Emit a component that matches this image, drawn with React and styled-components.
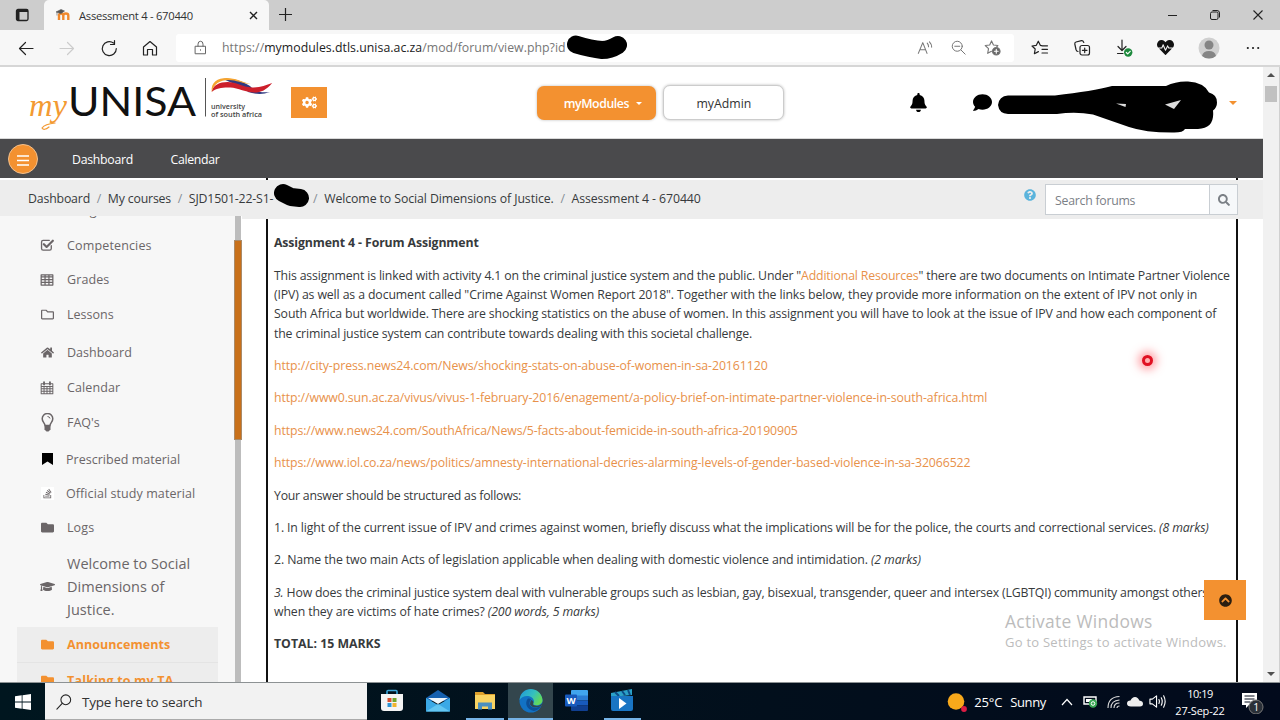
import styled, { createGlobalStyle } from "styled-components";
import {
  FaBell,
  FaChevronCircleUp,
  FaCogs,
  FaComment,
  FaFolder,
  FaGraduationCap,
  FaHeartbeat,
  FaHome,
  FaQuestionCircle,
  FaRegFolder,
  FaSearch,
  FaStackOverflow,
} from "react-icons/fa";

const GlobalStyle = createGlobalStyle`
  * {
    box-sizing: border-box;
  }
  body {
    margin: 0;
    overflow: hidden;
    font-family: "Open Sans", "Noto Sans", sans-serif;
    font-size: 12.3px;
    color: #373a3c;
  }
  svg {
    display: block;
    flex: none;
  }
`;

const Screen = styled.div`
  width: 1280px;
  height: 720px;
  display: flex;
  flex-direction: column;
  position: relative;
  overflow: hidden;
  background: #fff;
`;

const Label = styled.span`
  white-space: nowrap;
  letter-spacing: ${(p) => p.$ls || 0}px;
`;

const Spacer = styled.div`
  flex: ${(p) => (p.$w ? "none" : 1)};
  width: ${(p) => p.$w || 0}px;
`;

/* ---------- browser window ---------- */

const TabBar = styled.div`
  height: 30px;
  flex: none;
  display: flex;
  background: #cdcdcd;
`;
const TabMenu = styled.div`
  width: 44px;
  padding: 8px 0 0 15px;
`;
const Tab = styled.div`
  width: 225px;
  padding: 0 11px 0 12px;
  display: flex;
  align-items: center;
  gap: 9px;
  border-radius: 5px 5px 0 0;
  background: #f7f7f7;
  font-size: 11.2px;
  color: #333;
`;
const NewTab = styled.div`
  padding: 7px 0 0 9px;
`;
const WindowButtons = styled.div`
  display: flex;
  align-items: center;
  gap: 31px;
  padding-right: 16px;
`;

const Toolbar = styled.div`
  height: 37px;
  flex: none;
  display: flex;
  align-items: center;
  background: #f7f7f7;
  border-bottom: 2px solid #d6d6d6;
`;
const NavButtons = styled.div`
  width: 176px;
  flex: none;
  padding-left: 17px;
  display: flex;
  gap: 23.3px;
`;
const AddressBar = styled.div`
  width: 838px;
  height: 28px;
  flex: none;
  padding: 0 13px 0 17px;
  display: flex;
  align-items: center;
  background: #fff;
  border-radius: 3px;
  color: #767676;
  b {
    font-weight: 400;
    color: #222;
  }
`;
const Extensions = styled.div`
  display: flex;
  align-items: center;
  padding-left: 17px;
  gap: 24px;
`;

/* ---------- page ---------- */

const Viewport = styled.div`
  height: 615px;
  flex: none;
  display: flex;
`;
const Page = styled.div`
  width: 1263px;
  display: flex;
  flex-direction: column;
  overflow: hidden;
`;
const ScrollTrack = styled.div`
  width: 17px;
  display: flex;
  flex-direction: column;
  align-items: center;
  background: #f1f1f1;
  border-right: 1px solid #d0d0d0;
  padding: 6px 0 6px;
`;
const ScrollThumb = styled.div`
  width: 12px;
  height: 16px;
  margin: 9px 0 auto;
  background: #c1c1c1;
`;

const Header = styled.header`
  height: 72px;
  flex: none;
  display: flex;
  align-items: center;
  border-bottom: 1px solid #d9d9d9;
`;
const Settings = styled.div`
  width: 36px;
  height: 31px;
  display: flex;
  align-items: center;
  justify-content: center;
  color: #fff;
  background: #f39130;
`;
const HeaderButton = styled.div`
  width: ${(p) => (p.$primary ? 119 : 121)}px;
  height: ${(p) => (p.$primary ? 34 : 35)}px;
  margin-right: 7px;
  display: flex;
  align-items: center;
  justify-content: center;
  gap: 7px;
  border-radius: 7px;
  border: ${(p) => (p.$primary ? 0 : 1)}px solid #ccc;
  color: ${(p) => (p.$primary ? "#fff" : "#333")};
  background: ${(p) => (p.$primary ? "#f39130" : "#fff")};
  box-shadow: 0 0 3px #bbb;
  font-weight: ${(p) => (p.$primary ? 600 : 400)};
  padding-top: 2px;
  padding-left: ${(p) => (p.$primary ? 12 : 0)}px;
`;
const Caret = styled.span`
  border: ${(p) => p.$size || 3.5}px solid transparent;
  border-top-color: ${(p) => p.$color};
  border-bottom: 0;
  transform: ${(p) => (p.$up ? "rotate(180deg)" : "none")};
`;

const MainNav = styled.nav`
  height: 39px;
  flex: none;
  display: flex;
  align-items: center;
  padding-left: 8px;
  background: #4a4a4c;
  color: #fff;
  line-height: 17px;
  ${Label} {
    padding-top: 2px;
  }
`;
const MenuButton = styled.div`
  width: 30px;
  height: 30px;
  margin-right: 34px;
  padding-top: 3px;
  display: flex;
  align-items: center;
  justify-content: center;
  border: 1px solid #f3c08c;
  border-radius: 50%;
  background: #f39130;
`;

/* the post frame shows through between the nav and the breadcrumb */
const FramePeek = styled.div`
  height: 2px;
  flex: none;
  width: 972px;
  margin-left: 266px;
  border: solid #111;
  border-width: 0 2px;
`;
const Breadcrumb = styled.div`
  height: 39px;
  flex: none;
  display: flex;
  align-items: center;
  padding: 0 25px 0 28px;
  background: #ededed;
  > ${Label} {
    padding-bottom: 3px;
  }
  i {
    font-style: normal;
    color: #868e96;
    margin: 0 6.7px;
  }
`;
const HelpIcon = styled.div`
  height: 21px;
  margin-right: 9px;
  color: #5bb4dc;
`;
const SearchBox = styled.div`
  width: 193px;
  height: 31px;
  display: flex;
  border: 1px solid #c9ced3;
  background: #fff;
  color: #7b8086;
  line-height: 31px;
  padding-left: 9px;
`;
const SearchButton = styled.div`
  width: 28px;
  margin-left: auto;
  display: flex;
  align-items: center;
  justify-content: center;
  border-left: 1px solid #c9ced3;
  background: #f6f8fa;
`;

const Columns = styled.div`
  flex: 1;
  display: flex;
  min-height: 0;
`;
const Sidebar = styled.aside`
  width: 234px;
  margin-top: -3px;
  display: flex;
  flex-direction: column;
  overflow: hidden;
  background: #f7f7f7;
  padding-left: 17px;
`;
const SideItem = styled.div`
  width: 201px;
  height: ${(p) => p.$h}px;
  flex: none;
  display: flex;
  align-items: center;
  color: ${(p) => (p.$active ? "#f39130" : "#6b6668")};
  font-weight: ${(p) => (p.$active ? 700 : 400)};
  background: ${(p) => (p.$active ? "#ededed" : "none")};
  border-bottom: ${(p) => (p.$active ? 1 : 0)}px solid #e4e4e4;
  font-size: ${(p) => p.$size || 12.5}px;
  line-height: 23px;
  &:first-child {
    margin-top: -23px;
  }
`;
const SideIcon = styled.span`
  width: 26px;
  margin: 0 ${(p) => (p.$tight ? 6 : 7)}px 0 17px;
  display: flex;
  justify-content: center;
`;
const WhitePatch = styled.span`
  padding: 1px;
  background: #fff;
`;
const SideScroll = styled.div`
  width: 8px;
  margin-top: -3px;
  display: flex;
  flex-direction: column;
  align-items: center;
  background: linear-gradient(to right, #f7f7f7 1px, #bdbdbd 1px 7px, #fff 7px);
`;
const SideScrollThumb = styled.div`
  width: 8px;
  height: 200px;
  margin-top: 24px;
  background: #c8701a;
  border: 1px solid #a98a68;
`;

const Post = styled.main`
  width: 972px;
  margin-left: 24px;
  padding: 14.4px 0 0 6px;
  border: solid #111;
  border-width: 0 2px;
  line-height: 19.3px;
  p {
    margin: 0 0 13.1px;
  }
`;
const Line = styled(Label)`
  display: block;
  height: 19.3px;
`;
const Link = styled.span`
  color: #e8914a;
`;

/* ---------- things floating above the page ---------- */

const Floating = styled.div`
  position: absolute;
  left: ${(p) => p.$x}px;
  top: ${(p) => p.$y}px;
`;
const BackToTop = styled(Floating)`
  width: 42px;
  height: 40px;
  display: flex;
  align-items: center;
  justify-content: center;
  background: #f39130;
  color: #2b1e10;
`;
const Watermark = styled(Floating)`
  display: flex;
  flex-direction: column;
  color: #bcbcbc;
  font-size: 13px;
  line-height: 20px;
`;
const WatermarkTitle = styled(Label)`
  font-size: 17.4px;
  line-height: 22px;
`;
const Pointer = styled(Floating)`
  width: 11px;
  height: 11px;
  border: 3.5px solid #e01022;
  border-radius: 50%;
  background: #ffb0b0;
  box-shadow: 0 0 8px 4px rgba(255, 80, 90, 0.5);
`;

/* ---------- taskbar ---------- */

const Taskbar = styled.footer`
  height: 38px;
  flex: none;
  display: flex;
  background: linear-gradient(to right, #00161f, #020f1c 60%, #020a1c);
  border-top: 1px solid #8d9294;
  color: #fff;
`;
const StartButton = styled.div`
  width: 45px;
  display: flex;
  align-items: center;
  justify-content: center;
`;
const TaskSearch = styled.div`
  width: 322px;
  display: flex;
  align-items: center;
  gap: 10px;
  padding: 2px 0 0 11px;
  background: #f2f2f2;
  border-bottom: 1px solid #aaa;
  color: #333;
  font-size: 13.5px;
`;
const TaskApp = styled.div`
  width: ${(p) => p.$w || 46}px;
  display: flex;
  align-items: center;
  justify-content: center;
  background: ${(p) => (p.$active ? "#33464d" : "none")};
  border-bottom: 2px solid ${(p) => (p.$open ? "#76b3e6" : "transparent")};
`;
const Tray = styled.div`
  display: flex;
  align-items: center;
  font-size: 13px;
`;
const Clock = styled.div`
  width: 56px;
  display: flex;
  flex-direction: column;
  align-items: center;
  font-size: 11px;
  line-height: 17px;
`;

const LineIcon = ({ w = 18, color = "#222", sw = 1.2, children }) => (
  <svg
    width={w}
    height={w}
    viewBox="0 0 18 18"
    fill="none"
    stroke={color}
    strokeWidth={sw}
    strokeLinecap="round"
    strokeLinejoin="round"
  >
    {children}
  </svg>
);

const Logo = () => (
  <svg width="246" height="58" viewBox="0 0 246 58">
    <text x="1" y="42" fontFamily="Liberation Serif" fontStyle="italic" fontSize="32" fill="#f39a32" textLength="38" lengthAdjust="spacingAndGlyphs">
      my
    </text>
    <path d="M27 49q-10 1-13 5 2 3 7-1" fill="none" stroke="#f39a32" strokeWidth="1.200" strokeLinecap="round" />
    <text x="40" y="42" fontFamily="Lato" fontSize="41" fill="#111" textLength="128" lengthAdjust="spacingAndGlyphs">
      UNISA
    </text>
    <path d="M177.500 4v38.500" stroke="#555" strokeWidth="1" />
    <path d="M195 5c10-1 19 2 27 7l4 4q-12 0-22-7z" fill="#303a80" />
    <path d="M218 15c8 1 12 4 24 3-8 3-15 2-22 0z" fill="#303a80" />
    <path d="M183.700 18c1-7 8-10 16-10 8 0 15 5 24 5.500 8 0 14-2 20.500-4.500-6 7-11 9.500-18 9.500-8 0-16-4.500-24-5-7-.3-14 .5-18.500 4.500z" fill="#cc1f2b" />
    <path d="M183.700 18c-1-10 6-14 15-14 9 0 15 4 24 6-9-.5-14-4-22-4-9 .2-15 4-17 12z" fill="#f5a430" />
    <text x="183" y="34.800" fontFamily="Open Sans" fontWeight="600" fontSize="7.300" fill="#444" textLength="34" lengthAdjust="spacingAndGlyphs">
      university
    </text>
    <text x="183" y="42.500" fontFamily="Open Sans" fontWeight="600" fontSize="7.300" fill="#444" textLength="51" lengthAdjust="spacingAndGlyphs">
      of south africa
    </text>
  </svg>
);

const CheckSquare = () => (
  <LineIcon w={14} color="#6b6668" sw={1.7}>
    <path d="M14.500 10v3.500q0 2-2 2h-8.500q-2 0-2-2v-8.500q0-2 2-2h8" />
    <path d="M5 8l3.500 3.500 8-8" strokeWidth="2.800" />
  </LineIcon>
);
const TableIcon = () => (
  <LineIcon w={14} color="#6b6668" sw={1.6}>
    <path d="M1.500 2.500h15v13h-15zM1.500 5h15M1.500 8.500h15M1.500 12h15M6.500 3v12M11.500 3v12" />
  </LineIcon>
);
const CalendarIcon = () => (
  <LineIcon w={14} color="#6b6668" sw={1.3}>
    <path d="M1.500 3.500h15v13h-15zM1.500 7h15M1.500 10h15M1.500 13.200h15M5.200 7v9M9 7v9M12.800 7v9" />
    <path d="M5.200 1.500v3M12.800 1.500v3" strokeWidth="2.400" />
  </LineIcon>
);
const Bulb = () => (
  <svg width="13" height="19" viewBox="0 0 13 19">
    <path d="M4 12.500C4 10 1.200 9 1.200 5.800a5.300 5.300 0 0 1 10.600 0C11.800 9 9 10 9 12.500z" fill="none" stroke="#6b6668" strokeWidth="1.500" />
    <path d="M3.500 12.500h6v4l-2 2h-2l-2-2z" fill="#6b6668" />
    <path d="M6.500 3.500q2 0 2.500 2" stroke="#6b6668" fill="none" />
  </svg>
);
const Bookmark = () => (
  <svg width="11" height="12" viewBox="0 0 11 12">
    <path d="M0 0h11v12L5.500 8.500 0 12z" fill="#000" />
  </svg>
);

const menu = [
  { text: "Badges", h: 34.5 },
  { text: "Competencies", h: 35, icon: <CheckSquare />, ls: 0.15 },
  { text: "Grades", h: 34, icon: <TableIcon />, ls: 0.1 },
  { text: "Lessons", h: 36, icon: <FaRegFolder size={13} />, ls: 0 },
  { text: "Dashboard", h: 39, icon: <FaHome size={13} />, ls: 0.05 },
  { text: "Calendar", h: 32, icon: <CalendarIcon />, ls: 0.1 },
  { text: "FAQ's", h: 38, icon: <Bulb />, ls: 0 },
  { text: "Prescribed material", h: 35, icon: <Bookmark />, ls: 0.02, tight: true },
  {
    text: "Official study material",
    h: 33,
    icon: (
      <WhitePatch>
        <FaStackOverflow size={11} />
      </WhitePatch>
    ),
    ls: 0.08,
    tight: true,
  },
  { text: "Logs", h: 36, icon: <FaFolder size={13} />, ls: 0.1 },
  {
    text: (
      <>
        Welcome to Social
        <br />
        Dimensions of
        <br />
        Justice.
      </>
    ),
    h: 81,
    size: 14.5,
    icon: <FaGraduationCap size={15} />,
    ls: 0.02,
  },
  { text: "Announcements", h: 36, icon: <FaFolder size={13} />, active: true, ls: 0.06 },
  { text: "Talking to my TA", h: 36, icon: <FaFolder size={13} />, active: true, ls: 0.18 },
];

const links = [
  ["http://city-press.news24.com/News/shocking-stats-on-abuse-of-women-in-sa-20161120", -0.07],
  ["http://www0.sun.ac.za/vivus/vivus-1-february-2016/enagement/a-policy-brief-on-intimate-partner-violence-in-south-africa.html", -0.09],
  ["https://www.news24.com/SouthAfrica/News/5-facts-about-femicide-in-south-africa-20190905", -0.105],
  ["https://www.iol.co.za/news/politics/amnesty-international-decries-alarming-levels-of-gender-based-violence-in-sa-32066522", -0.085],
];

const BrowserChrome = () => (
  <>
    <TabBar>
      <TabMenu>
        <svg width="15" height="14" viewBox="0 0 15 14">
          <rect x="1.500" y="1.500" width="11.500" height="11" rx="1.500" fill="none" stroke="#222" strokeWidth="1.300" />
          <path d="M1.500 2h11.500v2h-11.500zM1.500 4h3v8h-3z" fill="#222" />
        </svg>
      </TabMenu>
      <Tab>
        <svg width="14" height="12" viewBox="0 0 14 12">
          <path d="M3 11V6.500q0-2 2-2t2.300 2V11M7.300 6.500q0-2 2.500-2t2.500 2V11" fill="none" stroke="#f0882c" strokeWidth="2.400" />
          <path d="M0 3l5-2.500L8.500 2 5 4.500zM1 3.500v3" fill="#555" stroke="#555" strokeWidth=".6" />
        </svg>
        <Label $ls={-0.26}>Assessment 4 - 670440</Label>
        <Spacer />
        <svg width="9" height="9" viewBox="0 0 9 9">
          <path d="M1 1l7 7M8 1L1 8" stroke="#222" strokeWidth="1.400" />
        </svg>
      </Tab>
      <NewTab>
        <svg width="15" height="15" viewBox="0 0 15 15">
          <path d="M7.500 1v13M1 7.500h13" stroke="#222" strokeWidth="1.200" />
        </svg>
      </NewTab>
      <Spacer />
      <WindowButtons>
        <svg width="11" height="11" viewBox="0 0 11 11">
          <path d="M1 5.500h9" stroke="#222" />
        </svg>
        <svg width="12" height="12" viewBox="0 0 12 12" fill="none" stroke="#222">
          <rect x="1.500" y="3" width="7.500" height="7.500" rx="1.500" />
          <path d="M3.500 1.500H8q2.500 0 2.500 2.500v4.500" />
        </svg>
        <svg width="12" height="12" viewBox="0 0 12 12">
          <path d="M1.500 1.500l9 9M10.500 1.500l-9 9" stroke="#222" strokeWidth="1.100" />
        </svg>
      </WindowButtons>
    </TabBar>
    <Toolbar>
      <NavButtons>
        <LineIcon>
          <path d="M16 9.500H2.500M8.500 3.500l-6 6 6 6" />
        </LineIcon>
        <LineIcon color="#ccc">
          <path d="M2 9.500h13.500M9.500 3.500l6 6-6 6" />
        </LineIcon>
        <LineIcon>
          <path d="M16.300 9.500A7 7 0 1 1 13.500 4M14.500 1.500v4h-4" />
        </LineIcon>
        <LineIcon>
          <path d="M2.500 8L9 2.500 15.500 8v8h-4v-5.500h-5V16h-4z" />
        </LineIcon>
      </NavButtons>
      <AddressBar>
        <LineIcon w={15} color="#666">
          <path d="M3 7.500h12v9H3zM6 7.500V5q0-3.500 3-3.500T12 5v2.500M9 11.700v.6" />
        </LineIcon>
        <Spacer $w={14} />
        <Label $ls={0.03}>
          https://<b>mymodules.dtls.unisa.ac.za</b>/mod/forum/view.php?id
        </Label>
        <Spacer />
        <LineIcon w={16} color="#777">
          <path d="M1.500 15L6.500 3l4.800 12M3.300 11h6.400M11.500 3.500q1.500 1.500 1.500 4M14 2q2.500 2.500 2.500 6" />
        </LineIcon>
        <Spacer $w={18} />
        <LineIcon w={15} color="#777">
          <circle cx="7.500" cy="7.500" r="6" />
          <path d="M4.500 7.500h6M12 12l5 5" />
        </LineIcon>
        <Spacer $w={18} />
        <LineIcon w={17} color="#777">
          <path d="M8 2l2 4.300 4.700.6-1.200 1.300M8 2L6 6.300l-4.700.6 3.500 3.300-.9 5 4-2.200" />
          <circle cx="13" cy="13" r="4" fill="#666" />
          <path d="M13 11v4M11 13h4" stroke="#fff" />
        </LineIcon>
      </AddressBar>
      <Extensions>
        <LineIcon>
          <path d="M11.500 6.800L9.300 6.300 7.300 2.200 5.300 6.300 1 7l3.200 3-.8 4.700 4-2.100M11.500 6.800h5M11 10.300h5.500M11 14h5.500" />
        </LineIcon>
        <LineIcon>
          <rect x="7" y="6.500" width="9.500" height="9.500" rx="2" />
          <path d="M11.700 9v4.600M9.400 11.300H14M5 12.500q-1.500 0-2-2L1.800 5q-.3-1.600 1.200-2l5.500-1.300q1.500-.2 2.300 1.800" />
        </LineIcon>
        <LineIcon>
          <path d="M7 1v10M3 7.500L7 11.500l4-4M2.500 14.500H8" />
          <circle cx="13.200" cy="13.500" r="4.200" fill="#1d8a3d" stroke="none" />
          <path d="M11.300 13.500l1.400 1.400 2.500-2.600" stroke="#fff" />
        </LineIcon>
        <FaHeartbeat size={17} color="#111" />
        <svg width="22" height="22" viewBox="0 0 22 22">
          <circle cx="11" cy="11" r="10.500" fill="#d0d0d0" />
          <circle cx="11" cy="8" r="4.500" fill="#858585" />
          <path d="M4 19q1-5 7-5t7 5q-3 2.500-7 2.500T4 19z" fill="#858585" />
        </svg>
        <LineIcon w={17}>
          <path d="M4 9.500h.1M9.500 9.500h.1M15 9.500h.1" strokeWidth="2.200" />
        </LineIcon>
      </Extensions>
    </Toolbar>
  </>
);

const PageHeader = () => (
  <>
    <Header>
      <Spacer $w={28} />
      <Logo />
      <Spacer $w={17} />
      <Settings>
        <FaCogs size={15} />
      </Settings>
      <Spacer $w={210.4} />
      <HeaderButton $primary>
        <Label $ls={-0.4}>myModules</Label>
        <Caret $color="#fff" />
      </HeaderButton>
      <HeaderButton>
        <Label $ls={0}>myAdmin</Label>
      </HeaderButton>
      <Spacer $w={118} />
      <FaBell size={19} color="#000" />
      <Spacer $w={45} />
      <FaComment size={19} color="#000" />
      <Spacer $w={237} />
      <Caret $color="#f39130" $size={4} />
    </Header>
    <MainNav>
      <MenuButton>
        <svg width="12" height="12" viewBox="0 0 12 12">
          <path d="M0 2h12M0 6.500h12M0 11h12" stroke="#fff" strokeWidth="1.600" />
        </svg>
      </MenuButton>
      <Label $ls={-0.28}>Dashboard</Label>
      <Spacer $w={37.5} />
      <Label $ls={-0.32}>Calendar</Label>
    </MainNav>
    <FramePeek />
    <Breadcrumb>
      <Label $ls={-0.16}>
        Dashboard<i>/</i>My courses<i>/</i>SJD1501-22-S1-
      </Label>
      <Spacer $w={33} />
      <Label $ls={-0.09}>
        <i>/</i>Welcome to Social Dimensions of Justice.<i>/</i>Assessment 4 - 670440
      </Label>
      <Spacer />
      <HelpIcon>
        <FaQuestionCircle size={12} />
      </HelpIcon>
      <SearchBox>
        <Label $ls={-0.25}>Search forums</Label>
        <SearchButton>
          <FaSearch size={12} />
        </SearchButton>
      </SearchBox>
    </Breadcrumb>
  </>
);

const Assignment = () => (
  <Post>
    <p>
      <Line $ls={-0.12}>
        <b>Assignment 4 - Forum Assignment</b>
      </Line>
    </p>
    <p>
      <Line $ls={-0.158}>
        This assignment is linked with activity 4.1 on the criminal justice system and the public. Under "
        <Link>Additional Resources</Link>" there are two documents on Intimate Partner Violence
      </Line>
      <Line $ls={-0.12}>
        (IPV) as well as a document called "Crime Against Women Report 2018". Together with the links below, they provide more information on the extent of IPV not only in
      </Line>
      <Line $ls={-0.13}>
        South Africa but worldwide. There are shocking statistics on the abuse of women. In this assignment you will have to look at the issue of IPV and how each component of
      </Line>
      <Line $ls={-0.16}>the criminal justice system can contribute towards dealing with this societal challenge.</Line>
    </p>
    {links.map(([url, ls]) => (
      <p key={url}>
        <Line $ls={ls}>
          <Link>{url}</Link>
        </Line>
      </p>
    ))}
    <p>
      <Line $ls={-0.24}>Your answer should be structured as follows:</Line>
    </p>
    <p>
      <Line $ls={-0.14}>
        1. In light of the current issue of IPV and crimes against women, briefly discuss what the implications will be for the police, the courts and correctional services.{" "}
        <em>(8 marks)</em>
      </Line>
    </p>
    <p>
      <Line $ls={-0.107}>
        2. Name the two main Acts of legislation applicable when dealing with domestic violence and intimidation. <em>(2 marks)</em>
      </Line>
    </p>
    <p>
      <Line $ls={-0.178}>
        <em>3.</em> How does the criminal justice system deal with vulnerable groups such as lesbian, gay, bisexual, transgender, queer and intersex (LGBTQI) community amongst others
      </Line>
      <Line $ls={-0.115}>
        when they are victims of hate crimes? <em>(200 words, 5 marks)</em>
      </Line>
    </p>
    <p>
      <Line>
        <b>TOTAL: 15 MARKS</b>
      </Line>
    </p>
  </Post>
);

const WindowsTaskbar = () => (
  <Taskbar>
    <StartButton>
      <svg width="16" height="16" viewBox="0 0 16 16" fill="#fff">
        <path d="M0 2.200l6.700-.9v6.300H0zM7.500 1.200L16 0v7.600H7.500zM0 8.400h6.700v6.300L0 13.800zM7.500 8.400H16V16l-8.500-1.200z" />
      </svg>
    </StartButton>
    <TaskSearch>
      <LineIcon w={16}>
        <circle cx="11" cy="6.500" r="5.500" />
        <path d="M7 10.500L1 17" />
      </LineIcon>
      <Label $ls={-0.2}>Type here to search</Label>
    </TaskSearch>
    <Spacer $w={2} />
    <TaskApp>
      <svg width="22" height="23" viewBox="0 0 22 23">
        <path d="M6 6V2.500q0-1 1-1h8q1 0 1 1V6" fill="none" stroke="#3aa5d8" strokeWidth="1.600" />
        <path d="M0 5h22v14q0 3-3 3H3q-3 0-3-3z" fill="#f4f4f4" />
        <path d="M6.500 9h4v4h-4z" fill="#d8502e" />
        <path d="M11.500 9h4v4h-4z" fill="#6fa52c" />
        <path d="M6.500 14h4v4h-4z" fill="#2d94d4" />
        <path d="M11.500 14h4v4h-4z" fill="#f0b32c" />
      </svg>
    </TaskApp>
    <TaskApp>
      <svg width="24" height="22" viewBox="0 0 24 22">
        <path d="M0 8L12 0l12 8v3H0z" fill="#1560ae" />
        <path d="M0 8l12 7 12-7v13.500H0z" fill="#3ba9e6" />
        <path d="M0 21.500L12 14l12 7.500z" fill="#63c6f2" />
        <path d="M2 8h20l-10 6z" fill="#eef6fb" />
      </svg>
    </TaskApp>
    <Spacer $w={5} />
    <TaskApp $w={38} $open>
      <svg width="22" height="20" viewBox="0 0 22 20">
        <path d="M1 1h8l2 2h10v5H1z" fill="#dda02c" />
        <path d="M1 4h20v14H1z" fill="#f8d362" />
        <path d="M4 18.500v-7h14v7h-4v-3H8v3z" fill="#4b8fc0" />
      </svg>
    </TaskApp>
    <Spacer $w={4} />
    <TaskApp $w={45} $active $open>
      <svg width="24" height="24" viewBox="0 0 24 24">
        <defs>
          <linearGradient id="edgeTop" x1="0" y1="0" x2="1" y2=".5">
            <stop offset="0" stopColor="#1f95dc" />
            <stop offset=".6" stopColor="#35c0bd" />
            <stop offset="1" stopColor="#62d95b" />
          </linearGradient>
        </defs>
        <circle cx="12" cy="12" r="11.500" fill="#1272c4" />
        <path d="M.6 11C2-4 22-3 23.500 11c.3 5-6 6.500-9 4.500-1-1 .5-1.500.5-3.500C14 6 4 5 .6 11z" fill="url(#edgeTop)" />
        <path d="M9 9.500C5 14 8 21 15 22q5-1 7-5c-5 3-11 2-11.500-2-.2-2 .5-3 1.500-4.500q-1-1.500-3-1z" fill="#0d4f96" />
        <path d="M14 15.500c3 2.500 7 1.500 9-1 0 1-.5 2-1 2.500-4 2-9 2-11-1.500q0-3 1.300-4.500 3 1 1.700 4.500z" fill="#33464d" />
      </svg>
    </TaskApp>
    <TaskApp>
      <svg width="23" height="21" viewBox="0 0 23 21">
        <path d="M7 0h15q1 0 1 1v5H6V1q0-1 1-1z" fill="#41a5ee" />
        <path d="M6 5.500h17v5H6z" fill="#2b7cd3" />
        <path d="M6 10.500h17v5H6z" fill="#185abd" />
        <path d="M6 15.500h17V20q0 1-1 1H7q-1 0-1-1z" fill="#103f91" />
        <rect y="4.500" width="12" height="12" rx="1" fill="#185abd" />
        <text x="1.500" y="14" fontSize="9.500" fontWeight="700" fill="#fff">
          W
        </text>
      </svg>
    </TaskApp>
    <Spacer $w={4.5} />
    <TaskApp $w={37} $open>
      <svg width="24" height="23" viewBox="0 0 24 23">
        <path d="M1 4L22 0v6L1 8z" fill="#2ba1c8" />
        <path d="M5 3l4 4M12 2l3 4M18 1l2 5" stroke="#0d4c86" strokeWidth="2" />
        <path d="M1 7h22v13q0 2-2 2H3q-2 0-2-2z" fill="#1975c4" />
        <path d="M9 9l7.500 5.500L9 20z" fill="#fff" />
      </svg>
    </TaskApp>
    <Spacer />
    <Tray>
      <svg width="21" height="20" viewBox="0 0 21 20">
        <circle cx="9" cy="9.500" r="8.300" fill="#f8a91b" />
        <circle cx="17" cy="17" r="2.900" fill="#dc1c44" />
      </svg>
      <Spacer $w={6} />
      <Label $ls={-0.2}>25°C</Label>
      <Spacer $w={8} />
      <Label $ls={-0.35}>Sunny</Label>
      <Spacer $w={15} />
      <svg width="12" height="8" viewBox="0 0 12 8">
        <path d="M1 7l5-5.500L11 7" fill="none" stroke="#fff" strokeWidth="1.200" />
      </svg>
      <Spacer $w={10} />
      <svg width="15" height="14" viewBox="0 0 15 14">
        <path d="M1 2h12v7H1z" fill="none" stroke="#fff" strokeWidth="1.400" />
        <path d="M3 4h6v3H3z" fill="#fff" />
        <circle cx="10" cy="8.500" r="4.200" fill="#3aa655" />
        <circle cx="10" cy="8.500" r="1.800" fill="none" stroke="#fff" />
      </svg>
      <Spacer $w={9} />
      <svg width="13" height="14" viewBox="0 0 13 14" fill="none" stroke="#ddd" strokeWidth="1.100">
        <path d="M1 13Q1 2 12.500 1.500M4 13q0-7.500 8.500-8M7 13q0-5 5.500-5M10 13q0-2 2.500-2" />
      </svg>
      <Spacer $w={7} />
      <svg width="16" height="11" viewBox="0 0 16 11">
        <path d="M4 10.500q-4 0-4-3t3.500-3Q5 1 8 1t4.300 3.500Q16 5 16 7.700t-3 2.800z" fill="#eee" />
      </svg>
      <Spacer $w={6} />
      <LineIcon w={17} color="#fff">
        <path d="M1 6.500h2.500L8 3v12l-4.500-3.500H1zM10.500 7q1 2 0 4M13 5q2 4 0 8M15.500 3q3.200 6 0 12" />
      </LineIcon>
      <Spacer $w={6} />
      <Clock>
        <Label $ls={-0.5}>10:19</Label>
        <Label $ls={-0.2}>27-Sep-22</Label>
      </Clock>
      <Spacer $w={13} />
      <svg width="24" height="25" viewBox="0 0 24 25">
        <path d="M1 4h15v12H8l-3 3v-3H1z" fill="#fff" />
        <path d="M3.500 7h10M3.500 10h10M3.500 13h6" stroke="#020a1c" />
        <circle cx="15" cy="18" r="7" fill="#2a3038" stroke="#777" />
        <text x="12.300" y="22" fontSize="10.500" fill="#fff">
          1
        </text>
      </svg>
      <Spacer $w={15} />
    </Tray>
  </Taskbar>
);

const App = () => (
  <Screen>
    <GlobalStyle />
    <BrowserChrome />
    <Viewport>
      <Page>
        <PageHeader />
        <Columns>
          <Sidebar>
            {menu.map((m, i) => (
              <SideItem key={i} $h={m.h} $active={m.active} $size={m.size}>
                <SideIcon $tight={m.tight}>{m.icon}</SideIcon>
                <Label $ls={m.ls}>{m.text}</Label>
              </SideItem>
            ))}
          </Sidebar>
          <SideScroll>
            <SideScrollThumb />
          </SideScroll>
          <Assignment />
        </Columns>
      </Page>
      <ScrollTrack>
        <Caret $color="#505050" $size={4} $up />
        <ScrollThumb />
        <Caret $color="#505050" $size={4} />
      </ScrollTrack>
    </Viewport>
    <WindowsTaskbar />

    {/* marker strokes over the private details */}
    <Floating $x={566} $y={34}>
      <svg width="62" height="26" viewBox="0 0 62 26">
        <path d="M10 10.500q15 4.500 26 5.500 8 0 16-5" fill="none" stroke="#000" strokeWidth="18" strokeLinecap="round" />
      </svg>
    </Floating>
    <Floating $x={272} $y={183}>
      <svg width="40" height="26" viewBox="0 0 40 26">
        <path d="M11 10l8 4 9 1" fill="none" stroke="#000" strokeWidth="18" strokeLinecap="round" strokeLinejoin="round" />
      </svg>
    </Floating>
    <Floating $x={998} $y={80}>
      <svg width="220" height="54" viewBox="0 0 220 54">
        <path
          d="M10 15.500h47Q95 11 114 6h54Q178 1 190 1.500q16 1 21 11 8 2 8 10 0 5-4 8 2 18-15 18.500h-13q-2 4-13 3.500-27 0-43-5.500L95 34.500q-17-3-36-.500H10Q1 33.500 0 25q1-9 10-9.500z"
          fill="#000"
        />
        <path d="M118 23.500l10 .500-.500 3zM167 24.500l16-4.500-7 9z" fill="#ddd" />
      </svg>
    </Floating>
    <Pointer $x={1142} $y={355} />
    <Watermark $x={1005} $y={610}>
      <WatermarkTitle $ls={0.3}>Activate Windows</WatermarkTitle>
      <Label $ls={0.25}>Go to Settings to activate Windows.</Label>
    </Watermark>
    <BackToTop $x={1204} $y={580}>
      <FaChevronCircleUp size={13} />
    </BackToTop>
  </Screen>
);

export default App;
